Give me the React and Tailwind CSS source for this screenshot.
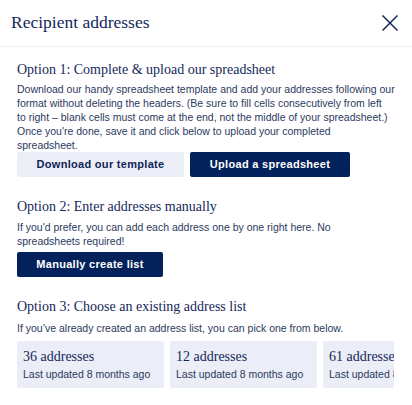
export default function App() {
  const serif = { fontFamily: '"Liberation Serif", Georgia, serif' };
  const cards = [
    { n: "36 addresses", t: "Last updated 8 months ago" },
    { n: "12 addresses", t: "Last updated 8 months ago" },
    { n: "61 addresses", t: "Last updated 8 months ago" },
  ];
  return (
    <div className="w-[412px] h-[405px] bg-white overflow-hidden text-[#0f2456]" style={{ fontFamily: '"Liberation Sans", Arial, sans-serif' }}>
      <div className="flex items-center justify-between h-[47px] pl-[11px] pr-[14px] border-b border-[#eef0f3]">
        <h1 className="text-[17.5px] leading-none text-[#14285a]" style={serif}>Recipient addresses</h1>
        <svg width="16" height="16" viewBox="0 0 16 16" className="text-[#14285a]">
          <path d="M0.5 0.5 L15.5 15.5 M15.5 0.5 L0.5 15.5" stroke="currentColor" strokeWidth="1.5" fill="none" />
        </svg>
      </div>
      <div className="pl-[17px] pr-[17px] pt-[13px]">
        <h2 className="text-[14px] leading-[20px] text-[#14285a]" style={serif}>Option 1: Complete &amp; upload our spreadsheet</h2>
        <p className="mt-[2px] text-[10.5px] leading-[14px] text-[#2c3a5e] whitespace-nowrap">
          Download our handy spreadsheet template and add your addresses following our<br />
          format without deleting the headers. (Be sure to fill cells consecutively from left<br />
          to right – blank cells must come at the end, not the middle of your spreadsheet.)<br />
          Once you're done, save it and click below to upload your completed<br />
          spreadsheet.
        </p>
        <div className="flex gap-[6px] mt-[0px]">
          <button className="w-[167px] h-[25px] rounded-[2px] bg-[#ebeef6] text-[#0f2456] text-[11px] font-bold tracking-[0.3px]">Download our template</button>
          <button className="w-[160px] h-[25px] rounded-[2px] bg-[#03215a] text-white text-[11px] font-bold tracking-[0.3px]">Upload a spreadsheet</button>
        </div>

        <h2 className="mt-[20px] text-[14px] leading-[20px] text-[#14285a]" style={serif}>Option 2: Enter addresses manually</h2>
        <p className="mt-[3px] text-[10.5px] leading-[14px] text-[#2c3a5e] pr-[60px]">
          If you'd prefer, you can add each address one by one right here. No spreadsheets required!
        </p>
        <button className="mt-[4px] w-[146px] h-[25px] rounded-[2px] bg-[#03215a] text-white text-[11px] font-bold tracking-[0.3px]">Manually create list</button>

        <h2 className="mt-[20px] text-[14px] leading-[20px] text-[#14285a]" style={serif}>Option 3: Choose an existing address list</h2>
        <p className="mt-[4px] text-[10.5px] leading-[14px] text-[#2c3a5e]">
          If you’ve already created an address list, you can pick one from below.
        </p>
        <div className="mt-[6px] w-[377px] overflow-hidden">
          <div className="flex gap-[6px]">
            {cards.map((c, i) => (
              <div key={i} className="shrink-0 w-[147px] h-[47px] rounded-[2px] bg-[#ebeef6] px-[6px] pt-[7px]">
                <div className="text-[14px] leading-[18px] text-[#14285a] whitespace-nowrap" style={serif}>{c.n}</div>
                <div className="mt-[1px] text-[10.5px] leading-[14px] text-[#2c3a5e] whitespace-nowrap">{c.t}</div>
              </div>
            ))}
          </div>
        </div>
      </div>
    </div>
  );
}
